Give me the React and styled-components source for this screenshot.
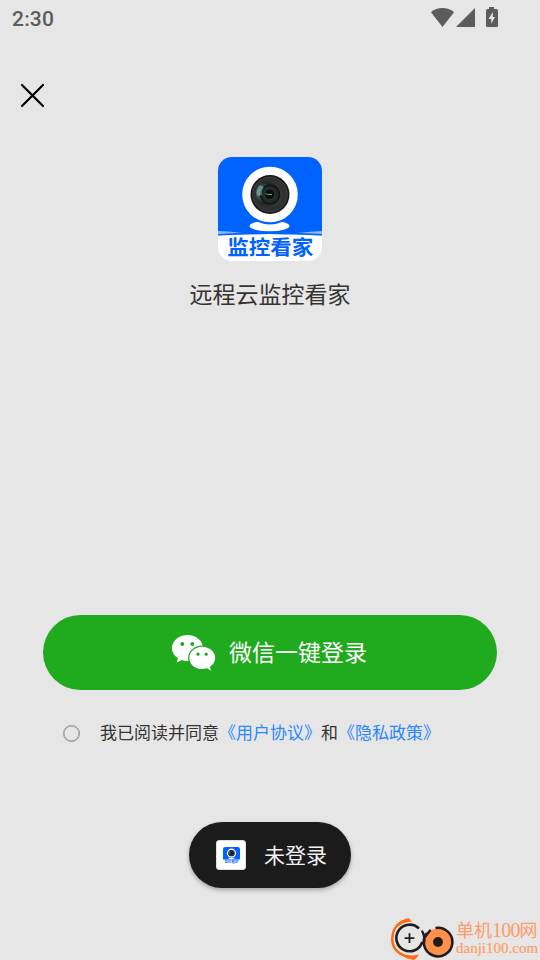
import { useId } from 'react';
import styled, { createGlobalStyle } from 'styled-components';

const App = () => {
    return (
        <>
            <GlobalStyle />
            <Screen>
                <StatusBar>
                    <Time>2:30</Time>
                    <StatusIcons />
                </StatusBar>
                <CloseBtn type="button" aria-label="关闭">
                    <CloseIcon />
                </CloseBtn>
                <Brand>
                    <AppLogo size={104} />
                    <AppName>远程云监控看家</AppName>
                </Brand>
                <LoginBtn type="button">
                    <WechatIcon />
                    <span>微信一键登录</span>
                </LoginBtn>
                <Agreement>
                    <Radio />
                    <p>
                        我已阅读并同意<Link>《用户协议》</Link>和<Link>《隐私政策》</Link>
                    </p>
                </Agreement>
                <Toast>
                    <ToastIcon>
                        <AppLogo size={17} />
                    </ToastIcon>
                    <span>未登录</span>
                </Toast>
                <Watermark>
                    <WatermarkLogo />
                    <WatermarkText>
                        <SiteName>单机<b>100</b>网</SiteName>
                        <SiteUrl>danji100.com</SiteUrl>
                    </WatermarkText>
                </Watermark>
            </Screen>
        </>
    );
};
export default App;

// > icons
const StatusIcons = () => (
    <svg width="68" height="22" viewBox="0 0 68 22" fill="#5c5c5c">
        <path d="M0 5.2C3.2 2.4 7.2 1 11.5 1S19.8 2.4 23 5.2L11.5 20Z" />
        <path d="M25 20L44 1V20Z" />
        <path
            fillRule="evenodd"
            d="M58 0h5v2h2.500q1.500 0 1.500 1.500v15q0 1.500-1.500 1.500h-9q-1.500 0-1.500-1.500v-15q0-1.500 1.500-1.500H58ZM61.800 5L57.600 12H60.300V16.800L64 10H61.800Z"
        />
    </svg>
);

const CloseIcon = () => (
    <svg width="25" height="25" viewBox="0 0 25 25" stroke="#000" strokeWidth="2.2" strokeLinecap="round">
        <path d="M2 2L23 23M23 2L2 23" />
    </svg>
);

const AppLogo = ({ size }) => {
    const id = useId();
    return (
        <svg width={size} height={size} viewBox="0 0 104 104">
            <defs>
                <clipPath id={`${id}c`}>
                    <rect width="104" height="104" rx="14" />
                </clipPath>
                <radialGradient id={`${id}g`} cx="0.28" cy="0.45" r="0.6">
                    <stop offset="0" stopColor="#8fc4c4" />
                    <stop offset="0.3" stopColor="#3c5c5e" />
                    <stop offset="0.65" stopColor="#222526" />
                    <stop offset="1" stopColor="#343434" />
                </radialGradient>
            </defs>
            <g clipPath={`url(#${id}c)`}>
                <rect width="104" height="82" fill="#0062ff" />
                <path d="M0 74Q24 75 42 79H62Q80 75 104 74V84H0Z" fill="#8bb9ff" />
                <path d="M0 78.500Q52 75.500 104 78.500V104H0Z" fill="#fff" />
                <path d="M0 77.800Q52 74.800 104 77.800" fill="none" stroke="#0062ff" strokeWidth="1.600" />
                <ellipse cx="51.500" cy="69" rx="20" ry="5.200" fill="#fff" />
                <circle cx="52" cy="38" r="29.500" fill="#0062ff" />
                <circle cx="52" cy="37.500" r="27.800" fill="#fff" />
                <circle cx="52" cy="37.500" r="19.500" fill="#181818" />
                <circle cx="52" cy="37.500" r="17.300" fill="#303030" stroke="#484848" strokeWidth="0.800" />
                <circle cx="51" cy="37.200" r="13.500" fill={`url(#${id}g)`} />
                <circle cx="52" cy="37.500" r="9.500" fill="#222829" stroke="#121212" strokeWidth="1.500" />
                <circle cx="51.500" cy="37.300" r="5.500" fill="#0b1111" stroke="#3c4546" strokeWidth="0.800" />
                <path d="M42 28Q37 32 39 39L44 38Q43 33 46 30Z" fill="#8ac4c1" opacity="0.550" />
                <path d="M47 36.500L50 37.500" stroke="#3d9b50" />
                <path d="M50 37.500H54" stroke="#9b9b45" />
                <LogoText transform="translate(52.3 98.3) scale(1 0.93)">监控看家</LogoText>
            </g>
        </svg>
    );
};

const WechatIcon = () => (
    <svg width="44" height="36" viewBox="0 0 44 36" fill="#fff">
        <path d="M15.500 0C6.900 0 0 5.900 0 13.200C0 17.400 2.300 20.900 6 23.300L4.600 27.600L9.800 25Q12.500 26 15.500 26C24.100 26 31 20.400 31 13.200S24.100 0 15.500 0Z" />
        <ellipse cx="30.200" cy="22.900" rx="14.200" ry="12.300" fill="#20aa1d" />
        <path d="M30.200 11.700C23 11.700 17.300 16.700 17.300 22.900S23 34 30.200 34Q32.500 34 34.800 33.200L39 35.400L37.900 31.700C41.100 29.700 43.200 26.500 43.200 22.900C43.200 16.700 37.400 11.700 30.200 11.700Z" />
        <g fill="#20aa1d">
            <circle cx="10.300" cy="9" r="1.900" />
            <circle cx="20.300" cy="9" r="1.900" />
            <circle cx="26" cy="19.200" r="1.600" />
            <circle cx="34.200" cy="19.200" r="1.600" />
        </g>
    </svg>
);

const WatermarkLogo = () => (
    <svg width="64" height="43" viewBox="0 0 64 43" fill="none">
        <path d="M12 4.500C6 8 2.500 14 2.200 21C2 29 6 35 13 38" stroke="#ff6b14" strokeWidth="2.400" strokeLinecap="round" />
        <path d="M9 6.500Q12 2 19 1.300L22 4.800Q15 4.500 9 9ZM11 36Q18 40 29 37.500Q27 41 24 43Q16 42 11 38Z" fill="#ff6b14" />
        <path d="M29 11.500A13.300 13.300 0 1 0 32.300 25" stroke="#241b1d" strokeWidth="2.600" />
        <path d="M19.500 16.200V26M14.600 21.100H24.400" stroke="#241b1d" strokeWidth="1.800" />
        <circle cx="48" cy="25" r="13.500" fill="#ff9148" />
        <path d="M45.500 11A14.300 14.300 0 1 1 37 16" stroke="#241b1d" strokeWidth="2.600" />
        <path d="M32.300 14.500Q35 19 34 26M40 13.500L35 20" stroke="#241b1d" strokeWidth="2.400" strokeLinecap="round" />
        <circle cx="48" cy="25" r="4.900" fill="#241b1d" />
    </svg>
);

// > styles
const GlobalStyle = createGlobalStyle`
    * {
        box-sizing: border-box;
        margin: 0;
        padding: 0;
    }
    body {
        background-color: #e6e6e6;
        font-family: 'Noto Sans CJK SC', sans-serif;
    }
    svg {
        display: block;
        flex-shrink: 0;
    }
    button {
        border: 0;
        font-family: inherit;
        cursor: pointer;
    }
`;

const Screen = styled.div`
    display: flex;
    flex-direction: column;
    width: 540px;
    height: 960px;
    background-color: #e6e6e6;
    overflow: hidden;
`;

const StatusBar = styled.div`
    display: flex;
    justify-content: space-between;
    height: 36px;
    padding: 7px 41px 0 12px;
`;
const Time = styled.span`
    font-family: Roboto, sans-serif;
    font-size: 21px;
    font-weight: 500;
    line-height: 24px;
    letter-spacing: 0.2px;
    color: #5c5c5c;
`;

const CloseBtn = styled.button`
    width: 25px;
    height: 25px;
    margin: 47px 0 0 20px;
    background: none;
`;

const Brand = styled.div`
    display: flex;
    flex-direction: column;
    align-items: center;
    margin-top: 49px;
`;
const LogoText = styled.text`
    font-size: 21.500px;
    font-weight: 700;
    text-anchor: middle;
    fill: #0062ff;
`;
const AppName = styled.h1`
    margin-top: 15px;
    font-size: 23px;
    font-weight: 400;
    line-height: 34px;
    color: #333;
`;

const LoginBtn = styled.button`
    display: flex;
    justify-content: center;
    align-items: center;
    gap: 13px;
    height: 75px;
    margin: 305px 43px 0;
    padding-right: 1px;
    border-radius: 38px;
    background-color: #20aa1d;
    font-size: 23px;
    color: #fff;

    span {
        padding-bottom: 3px;
    }
`;

const Agreement = styled.div`
    display: flex;
    align-items: center;
    gap: 20px;
    height: 26px;
    margin: 30px 0 0 63px;
    font-size: 17px;
    line-height: 26px;
    color: #333;

    p {
        padding-bottom: 2px;
    }
`;
const Radio = styled.span`
    width: 17px;
    height: 17px;
    margin-top: 1px;
    border: 1.500px solid #949494;
    border-radius: 50%;
    box-shadow: inset 0 0 0 0.5px #949494;
`;
const Link = styled.a`
    color: #2b86ff;
    cursor: pointer;
`;

const Toast = styled.div`
    display: flex;
    align-items: center;
    align-self: center;
    gap: 18px;
    width: 162px;
    height: 66px;
    margin-top: 76px;
    padding-left: 27px;
    border-radius: 33px;
    background-color: #1b1b1b;
    box-shadow: 0 2px 4px rgba(0, 0, 0, 0.3);
    font-size: 21px;
    color: #f2f2f2;
`;
const ToastIcon = styled.span`
    display: flex;
    justify-content: center;
    align-items: center;
    width: 30px;
    height: 30px;
    border: 1px solid #ddd;
    border-radius: 3px;
    background-color: #fff;

    & + span {
        padding-bottom: 2px;
    }
`;

const Watermark = styled.div`
    display: flex;
    align-self: flex-end;
    gap: 2px;
    height: 43px;
    margin-top: 29px;
    padding-right: 2px;
`;
const WatermarkText = styled.div`
    width: 82px;
    padding-top: 2px;
    color: #ff9c66;
    white-space: nowrap;
`;
const SiteName = styled.div`
    font-size: 18px;
    line-height: 21px;

    b {
        font-family: 'Liberation Serif', serif;
        font-size: 20px;
        font-weight: 400;
        letter-spacing: -0.8px;
    }
`;
const SiteUrl = styled.div`
    font-family: 'Liberation Serif', serif;
    font-size: 15px;
    line-height: 15px;
    -webkit-text-stroke: 0.2px #ff9c66;
`;
